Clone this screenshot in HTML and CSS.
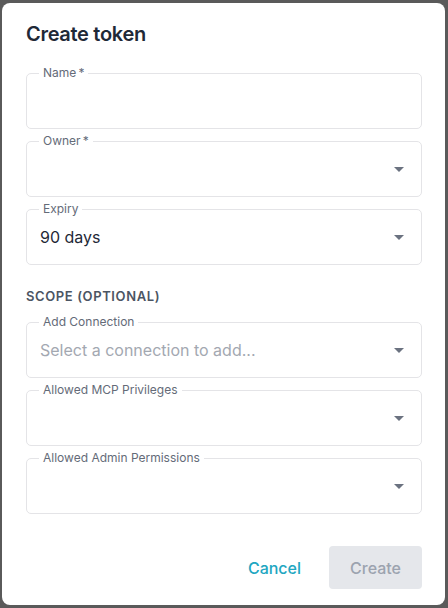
FILE: index.html
```html
<!DOCTYPE html>
<html lang="en">
<head>
<meta charset="utf-8">
<title>Create token</title>
<link rel="stylesheet" href="styles.css">
</head>
<body>
<div class="backdrop">
  <div class="modal">
    <h2 class="title">Create token</h2>
    <div class="fields">
      <div class="field">
        <span class="field-label">Name&thinsp;*</span>
      </div>
      <div class="field">
        <span class="field-label">Owner&thinsp;*</span>
        <svg class="arrow" viewBox="0 0 24 24" width="24" height="24"><path d="M7 10l5 5 5-5z"/></svg>
      </div>
      <div class="field">
        <span class="field-label">Expiry</span>
        <span class="value">90 days</span>
        <svg class="arrow" viewBox="0 0 24 24" width="24" height="24"><path d="M7 10l5 5 5-5z"/></svg>
      </div>
    </div>
    <h3 class="section">SCOPE (OPTIONAL)</h3>
    <div class="fields">
      <div class="field">
        <span class="field-label">Add Connection</span>
        <span class="value placeholder">Select a connection to add...</span>
        <svg class="arrow" viewBox="0 0 24 24" width="24" height="24"><path d="M7 10l5 5 5-5z"/></svg>
      </div>
      <div class="field">
        <span class="field-label">Allowed MCP Privileges</span>
        <svg class="arrow" viewBox="0 0 24 24" width="24" height="24"><path d="M7 10l5 5 5-5z"/></svg>
      </div>
      <div class="field">
        <span class="field-label">Allowed Admin Permissions</span>
        <svg class="arrow" viewBox="0 0 24 24" width="24" height="24"><path d="M7 10l5 5 5-5z"/></svg>
      </div>
    </div>
    <div class="actions">
      <button class="btn btn-text">Cancel</button>
      <button class="btn btn-disabled" disabled>Create</button>
    </div>
  </div>
</div>
</body>
</html>
```
FILE: styles.css
```css
* { box-sizing: border-box; }
html, body {
  margin: 0;
  padding: 0;
  width: 448px;
  height: 608px;
  overflow: hidden;
  background: #5a5a5a;
  font-family: Inter, "Liberation Sans", sans-serif;
}
.backdrop {
  width: 448px;
  height: 608px;
  padding: 3px 3px 3px 2px;
}
.modal {
  width: 443px;
  height: 602px;
  background: #ffffff;
  border-radius: 8px;
  padding: 17px 23px 16px 24px;
  display: flex;
  flex-direction: column;
}
.title {
  margin: 0;
  font-size: 20px;
  line-height: 28px;
  font-weight: 600;
  letter-spacing: -0.3px;
  color: #1f2937;
}
.fields {
  display: flex;
  flex-direction: column;
  gap: 12px;
}
.title + .fields { margin-top: 25px; }
.field {
  position: relative;
  height: 56px;
  border: 1px solid #e4e4e7;
  border-radius: 5px;
  display: flex;
  align-items: center;
  padding: 0 10px 0 13px;
}
.field-label {
  position: absolute;
  top: -8px;
  left: 12px;
  padding: 0 4px;
  background: #ffffff;
  font-size: 12px;
  line-height: 14px;
  color: #646b78;
}
.value {
  font-size: 16px;
  line-height: 22px;
  color: #1f2937;
}
.placeholder { color: #a3a8b1; }
.arrow {
  margin-left: auto;
  fill: #6b7280;
  flex: none;
}
.section {
  margin: 21px 0 16px;
  font-size: 13px;
  line-height: 20px;
  font-weight: 600;
  color: #4b5563;
  letter-spacing: 0.6px;
}
.actions {
  margin-top: auto;
  display: flex;
  justify-content: flex-end;
  gap: 8px;
}
.btn {
  font-family: inherit;
  font-size: 16px;
  font-weight: 500;
  height: 43px;
  padding: 0 20px;
  border: none;
  border-radius: 4px;
  background: transparent;
}
.btn-text { color: #21a6c1; }
.btn-disabled {
  background: #e5e7eb;
  color: #9ca3af;
  width: 93px;
}
```
